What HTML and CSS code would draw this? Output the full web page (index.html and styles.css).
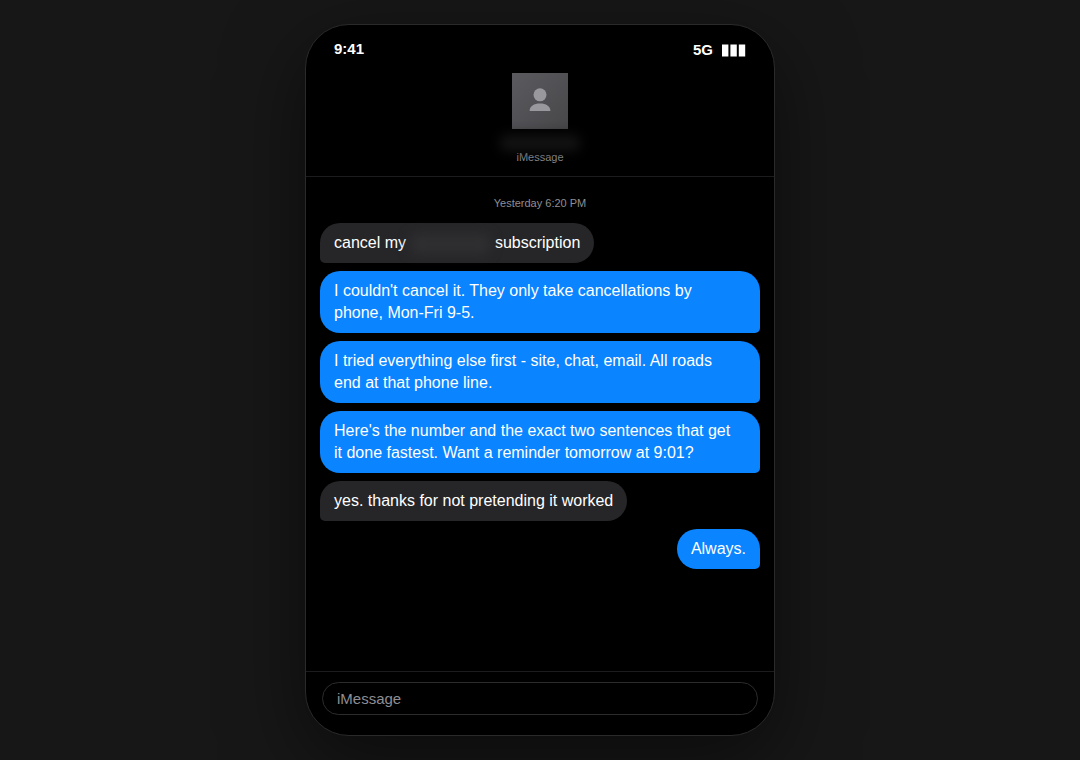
FILE: index.html
```html
<!DOCTYPE html>
<html lang="en">
<head>
<meta charset="utf-8">
<meta name="viewport" content="width=device-width, initial-scale=1">
<title>Messages</title>
<link rel="stylesheet" href="styles.css">
</head>
<body>
<main class="phone">
  <div class="status">
    <span class="time">9:41</span>
    <span class="signal">5G
      <svg class="bars" viewBox="0 0 24 13" aria-hidden="true"><path d="M0 .5h6.400v12H0zM8.400 .5h6.400v12H8.400zM16.800 .5h6.400v12h-6.400z"/></svg>
    </span>
  </div>
  <header class="contact">
    <div class="avatar">
      <svg viewBox="0 0 24 24" aria-hidden="true"><circle cx="12" cy="7.800" r="6.500"/><path d="M1.600 24C1.600 19 6 16.400 12 16.400S22.400 19 22.400 24Z"/></svg>
    </div>
    <div class="hidden-name"></div>
    <div class="service">iMessage</div>
  </header>
  <section class="thread">
    <time class="stamp">Yesterday 6:20 PM</time>
    <p class="bubble received">cancel my <span class="redacted"></span> subscription</p>
    <p class="bubble sent long">I couldn't cancel it. They only take cancellations by<br>phone, Mon-Fri 9-5.</p>
    <p class="bubble sent long">I tried everything else first - site, chat, email. All roads<br>end at that phone line.</p>
    <p class="bubble sent long">Here's the number and the exact two sentences that get<br>it done fastest. Want a reminder tomorrow at 9:01?</p>
    <p class="bubble received">yes. thanks for not pretending it worked</p>
    <p class="bubble sent">Always.</p>
  </section>
  <form class="composer">
    <input class="field" type="text" placeholder="iMessage" aria-label="iMessage">
  </form>
</main>
</body>
</html>
```
FILE: styles.css
```css
* {
  box-sizing: border-box;
}

body {
  margin: 0;
  min-height: 100vh;
  padding: 24px;
  display: flex;
  justify-content: center;
  background: #171717;
  color: #fff;
  font-family: "Liberation Sans", Arial, sans-serif;
}

.phone {
  width: 100%;
  max-width: 470px;
  display: flex;
  flex-direction: column;
  overflow: hidden;
  background: #000;
  border: 1px solid #2a2a2a;
  border-radius: 44px;
  box-shadow: 0 24px 80px rgba(0, 0, 0, 0.5);
}

.status {
  display: flex;
  justify-content: space-between;
  padding: 15px 28px 0;
  font-size: 15px;
  line-height: 17px;
  font-weight: 700;
}

.signal {
  display: flex;
  align-items: center;
  gap: 9px;
  padding-top: 1px;
}

.bars {
  width: 24px;
  height: 13px;
  margin-top: 2px;
  fill: #fff;
}

.contact {
  display: flex;
  flex-direction: column;
  align-items: center;
  padding: 15px 16px 12px;
  border-bottom: 1px solid #1c1c1e;
}

.avatar {
  width: 56px;
  height: 56px;
  padding-bottom: 4px;
  display: flex;
  align-items: center;
  justify-content: center;
  background: linear-gradient(135deg, #5b5b5f, #47474a);
}

.avatar svg {
  width: 24px;
  height: 24px;
  fill: #98989d;
}

.hidden-name {
  width: 80px;
  height: 16px;
  margin: 6px 0 0;
  border-radius: 6px;
  background: #131314;
  filter: blur(6px);
}

.service {
  font-size: 11px;
  line-height: 12px;
  padding-bottom: 1px;
  color: #8e8e93;
}

.thread {
  flex: 1;
  display: flex;
  flex-direction: column;
  gap: 8px;
  padding: 20px 14px;
}

.stamp {
  align-self: center;
  margin-bottom: 5px;
  font-size: 11px;
  line-height: 13px;
  color: #8e8e93;
}

.bubble {
  margin: 0;
  padding: 9px 14px;
  border-radius: 20px;
  font-size: 16px;
  line-height: 22px;
}

.received {
  align-self: flex-start;
  background: #262629;
  border-bottom-left-radius: 5px;
}

.sent {
  align-self: flex-end;
  background: #0a84ff;
  border-bottom-right-radius: 5px;
}

.long {
  width: 100%;
}

.redacted {
  display: inline-block;
  width: 80px;
  height: 20px;
  vertical-align: middle;
  border-radius: 6px;
  background: #2f2f31;
  filter: blur(6px);
}

.composer {
  padding: 10px 16px 20px;
  border-top: 1px solid #1c1c1e;
}

.field {
  display: block;
  width: 100%;
  height: 33px;
  padding: 0 14px 1px;
  border: 1px solid #2c2c2e;
  border-radius: 17px;
  background: transparent;
  color: #fff;
  font: 15px "Liberation Sans", Arial, sans-serif;
}

.field::placeholder {
  color: #8e8e93;
}
```
